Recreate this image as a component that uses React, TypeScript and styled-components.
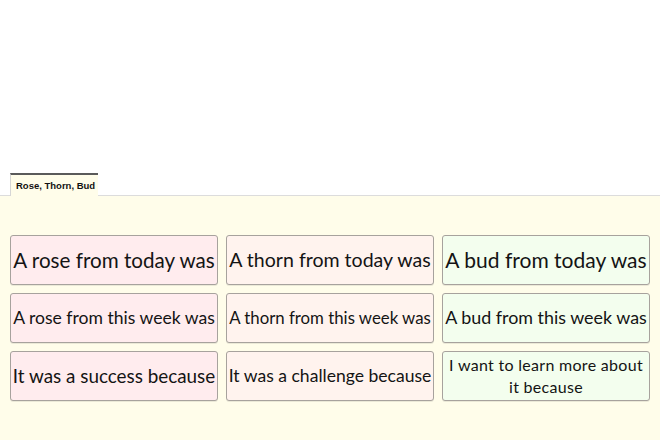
import React, { useMemo } from 'react';
import styled, { createGlobalStyle } from 'styled-components';

const GlobalStyle = createGlobalStyle`
  html, body {
    margin: 0;
    padding: 0;
    background: #ffffff;
  }
  #root {
    width: 660px;
    height: 440px;
    overflow: hidden;
  }
`;

const CARD_FONT = '"Lato", "Open Sans", sans-serif';
const FIT_WIDTH = 203;

type Tone = 'rose' | 'thorn' | 'bud';

interface CardData {
    text: string;
    tone: Tone;
    maxSize: number;
    fixed?: boolean;
}

const cards: CardData[] = [
    { text: 'A rose from today was', tone: 'rose', maxSize: 24 },
    { text: 'A thorn from today was', tone: 'thorn', maxSize: 24 },
    { text: 'A bud from today was', tone: 'bud', maxSize: 24 },
    { text: 'A rose from this week was', tone: 'rose', maxSize: 24 },
    { text: 'A thorn from this week was', tone: 'thorn', maxSize: 24 },
    { text: 'A bud from this week was', tone: 'bud', maxSize: 24 },
    { text: 'It was a success because', tone: 'rose', maxSize: 24 },
    { text: 'It was a challenge because', tone: 'thorn', maxSize: 24 },
    { text: 'I want to learn more about\nit because', tone: 'bud', maxSize: 16, fixed: true },
];

let canvas: HTMLCanvasElement | null = null;
const measure = (text: string, size: number) => {
    if (!canvas) canvas = document.createElement('canvas');
    const ctx = canvas.getContext('2d');
    if (!ctx) return text.length * size * 0.45;
    ctx.font = `${size}px ${CARD_FONT}`;
    return ctx.measureText(text).width;
};

const FitCard: React.FC<{ card: CardData }> = ({ card }) => {
    const size = useMemo(() => {
        if (card.fixed) return card.maxSize;
        const w = measure(card.text, 100);
        return Math.min(card.maxSize, (FIT_WIDTH * 100) / w);
    }, [card]);

    return (
        <Card $tone={card.tone}>
            <CardText $wrap={!!card.fixed} style={{ fontSize: `${size}px` }}>
                {card.text}
            </CardText>
        </Card>
    );
};

const App: React.FC = () => (
    <>
        <GlobalStyle />
        <Page>
            <Blank />
            <TabBar>
                <Tab>Rose, Thorn, Bud</Tab>
            </TabBar>
            <Panel>
                <Grid>
                    {cards.map(c => (
                        <FitCard key={c.text} card={c} />
                    ))}
                </Grid>
            </Panel>
        </Page>
    </>
);

const Page = styled.div`
  display: flex;
  flex-direction: column;
  width: 660px;
  height: 440px;
`;

const Blank = styled.div`
  height: 173px;
  background: #ffffff;
  flex-shrink: 0;
`;

const TabBar = styled.div`
  display: flex;
  align-items: flex-end;
  height: 22px;
  padding-left: 10px;
  border-bottom: 1px solid #dcdcdc;
  flex-shrink: 0;
`;

const Tab = styled.div`
  box-sizing: border-box;
  height: 23px;
  margin-bottom: -1px;
  width: 88px;
  padding: 5px 0 0 5px;
  background: #fffdea;
  border-top: 2px solid #5a5a5a;
  border-left: 1px solid #d6d6d6;
  font-family: "Liberation Sans", Arial, sans-serif;
  font-weight: 700;
  font-size: 9.5px;
  color: #111;
  white-space: nowrap;
`;

const Panel = styled.div`
  flex: 1;
  background: #fffdea;
  padding: 39px 10px 0 10px;
`;

const Grid = styled.div`
  display: grid;
  grid-template-columns: repeat(3, 208px);
  grid-auto-rows: 50px;
  gap: 8px;
`;

const toneBg: Record<Tone, string> = {
    rose: '#ffecee',
    thorn: '#fff3ee',
    bud: '#f3feee',
};

const Card = styled.div<{ $tone: Tone }>`
  box-sizing: border-box;
  display: flex;
  align-items: center;
  justify-content: center;
  background: ${p => toneBg[p.$tone]};
  border: 1px solid #a7a29d;
  border-radius: 3px;
  box-shadow: 0 1px 0 rgba(0, 0, 0, 0.08);
  overflow: hidden;
`;

const CardText = styled.div<{ $wrap: boolean }>`
  font-family: ${CARD_FONT};
  color: #141414;
  text-align: center;
  white-space: ${p => (p.$wrap ? 'pre-line' : 'nowrap')};
  line-height: ${p => (p.$wrap ? '22px' : '1.1')};
  letter-spacing: ${p => (p.$wrap ? '0.3px' : '0')};
`;

export default App;
